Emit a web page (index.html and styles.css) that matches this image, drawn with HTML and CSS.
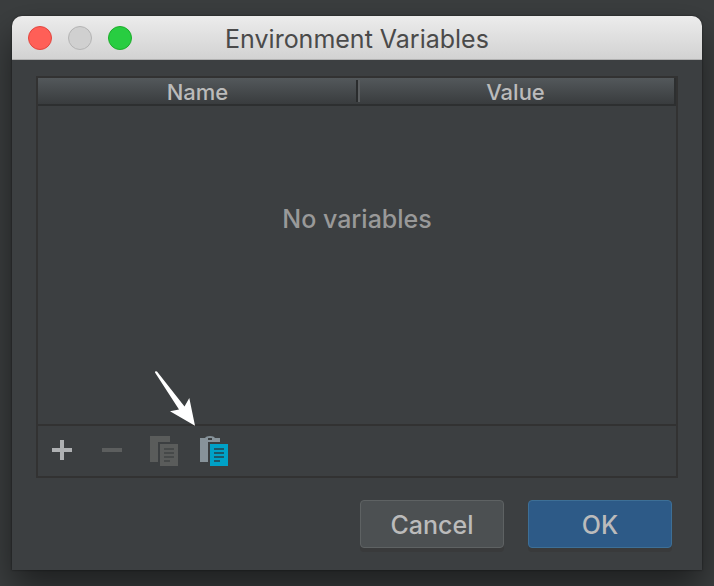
FILE: index.html
```html
<!DOCTYPE html>
<html lang="en">
<head>
<meta charset="utf-8">
<title>Environment Variables</title>
<link rel="stylesheet" href="styles.css">
</head>
<body>
<main class="dialog" role="dialog" aria-labelledby="dialog-title">
  <header class="titlebar">
    <div class="lights">
      <button class="light close" type="button" aria-label="Close"></button>
      <button class="light minimize" type="button" aria-label="Minimize" disabled></button>
      <button class="light maximize" type="button" aria-label="Zoom"></button>
    </div>
    <h1 class="title" id="dialog-title">Environment Variables</h1>
  </header>
  <div class="content">
    <section class="panel">
      <div class="table-area">
        <table class="variables">
          <thead>
            <tr><th scope="col">Name</th><th scope="col">Value</th></tr>
          </thead>
          <tbody>
            <tr><td colspan="2">No variables</td></tr>
          </tbody>
        </table>
      </div>
      <div class="toolbar" role="toolbar" aria-label="Variables">
        <button class="tool" type="button" aria-label="Add">
          <svg viewBox="0 0 32 32"><path fill="#afb1b3" d="M14 5h4v8h8v4h-8v8h-4v-8H6v-4h8z"/></svg>
        </button>
        <button class="tool" type="button" aria-label="Remove" disabled>
          <svg viewBox="0 0 32 32"><path fill="#5c5e5e" d="M6 13h20v4H6z"/></svg>
        </button>
        <button class="tool" type="button" aria-label="Copy" disabled>
          <svg viewBox="0 0 32 32"><path fill="#5a5c5b" d="M4 1h20v6H12v20H4zM14 9h18v22H14z"/><path fill="#464949" d="M18 13h10v2H18zM18 17h10v2H18zM18 21h10v2H18zM18 25h6v2h-6z"/></svg>
        </button>
        <button class="tool" type="button" aria-label="Paste">
          <svg viewBox="0 0 32 32"><path fill="#87939a" fill-rule="evenodd" d="M4 3h5q1-2 5-2t5 2h5v4H12v20H4zM12 3h4v2h-4z"/><path fill="#00a1c7" d="M14 9h18v22H14z"/><path fill="#1d5768" d="M18 13h10v2H18zM18 17h10v2H18zM18 21h10v2H18zM18 25h6v2h-6z"/></svg>
          <svg class="pointer" viewBox="0 0 42 56" aria-hidden="true"><path fill="#fff" d="M1 2.500Q.8.800 3 1.500L30.500 36.500 35.300 28 41 55.700 16 41.300 25 39.500z"/></svg>
        </button>
      </div>
    </section>
    <footer class="actions">
      <button class="action" type="button">Cancel</button>
      <button class="action primary" type="button">OK</button>
    </footer>
  </div>
</main>
</body>
</html>
```
FILE: styles.css
```css
*,
*::after {
  box-sizing: border-box;
}

body {
  margin: 0;
  min-height: 100vh;
  padding: 16px 12px;
  display: flex;
  background: #3b3e3f;
  font-family: Inter, "Liberation Sans", sans-serif;
  overflow: hidden;
}

button {
  margin: 0;
  padding: 0;
  border: 0;
  font: inherit;
}

.dialog {
  flex: 1;
  display: flex;
  flex-direction: column;
  border-radius: 10px 10px 0 0;
  background: #3c3f41;
  box-shadow: 0 0 2px rgba(0, 0, 0, 0.6), 0 18px 36px rgba(0, 0, 0, 0.5);
}

.titlebar {
  display: grid;
  grid-template-columns: 1fr auto 1fr;
  align-items: center;
  height: 44px;
  padding: 0 16px;
  border-bottom: 1px solid #b1b1b1;
  border-radius: 10px 10px 0 0;
  background: linear-gradient(#ececec, #d2d2d2);
}

.lights {
  display: flex;
  gap: 16px;
}

.light {
  width: 24px;
  height: 24px;
  border: 1px solid;
  border-radius: 50%;
}

.close {
  background: #ff5f57;
  border-color: #e2463f;
}

.minimize {
  background: #d0d0d0;
  border-color: #b4b4b4;
}

.maximize {
  background: #28cd41;
  border-color: #1dad2b;
}

.title {
  margin: 0;
  padding-top: 2px;
  font-size: 25px;
  line-height: 30px;
  font-weight: 400;
  color: #4a4a4a;
}

.content {
  flex: 1;
  display: flex;
  flex-direction: column;
  padding: 16px 24px 22px;
}

.panel {
  flex: 1;
  display: flex;
  flex-direction: column;
  border: 2px solid #323232;
}

.table-area {
  flex: 1;
}

.variables {
  width: 100%;
  table-layout: fixed;
  border-collapse: separate;
  border-spacing: 0;
}

.variables th {
  position: relative;
  height: 28px;
  padding: 2px 0 0;
  border-bottom: 2px solid #2d2f30;
  background: linear-gradient(#53585b, #393c3e);
  font-size: 22px;
  line-height: 24px;
  font-weight: 500;
  color: #bbb;
}

.variables th:last-child {
  border-right: 2px solid #2d2f30;
}

.variables th:first-child::after {
  content: "";
  position: absolute;
  z-index: 1;
  top: 2px;
  right: -3px;
  width: 4px;
  height: 22px;
  border-left: 2px solid #2a2c2d;
  border-right: 2px solid #5b5e60;
}

.variables td {
  padding: 96px 0 0;
  font-size: 25px;
  line-height: 34px;
  font-weight: 500;
  text-align: center;
  color: #999;
}

.toolbar {
  display: flex;
  align-items: center;
  gap: 18px;
  height: 52px;
  padding: 0 8px;
  border-top: 2px solid #323232;
}

.tool {
  position: relative;
  width: 32px;
  height: 32px;
  background: none;
}

.tool svg {
  display: block;
  width: 32px;
  height: 32px;
}

.tool .pointer {
  position: absolute;
  right: 32px;
  bottom: 41px;
  width: 42px;
  height: 56px;
}

.actions {
  display: flex;
  justify-content: flex-end;
  gap: 24px;
  padding: 22px 6px 0;
}

.action {
  width: 144px;
  height: 48px;
  padding-top: 2px;
  border: 1px solid #5e6263;
  border-radius: 4px;
  background: #4c5052;
  box-shadow: 0 4px 0 #393a3b;
  font-size: 25px;
  font-weight: 500;
  color: #bbb;
}

.primary {
  border-color: #3d6f96;
  background: #2d5a87;
}
```
